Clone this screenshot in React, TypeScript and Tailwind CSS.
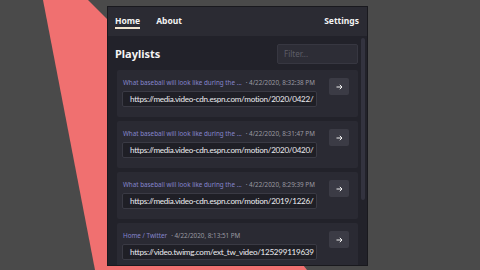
import React from "react";

const items = [
  {
    title: "What baseball will look like during the ...",
    date: "4/22/2020, 8:32:38 PM",
    url: "https://media.video-cdn.espn.com/motion/2020/0422/",
  },
  {
    title: "What baseball will look like during the ...",
    date: "4/22/2020, 8:31:47 PM",
    url: "https://media.video-cdn.espn.com/motion/2020/0420/",
  },
  {
    title: "What baseball will look like during the ...",
    date: "4/22/2020, 8:29:39 PM",
    url: "https://media.video-cdn.espn.com/motion/2019/1226/",
  },
  {
    title: "Home / Twitter",
    date: "4/22/2020, 8:13:51 PM",
    url: "https://video.twimg.com/ext_tw_video/125299119639",
  },
];

function Card({ title, date, url }: { title: string; date: string; url: string }) {
  return (
    <div className="flex shrink-0 h-[47px] bg-[#2a2a33] rounded-[2px] pl-[5px] pr-[8px] pt-[8px] gap-[12px]">
      <div className="flex flex-col w-[195px] min-w-0">
        <div className="flex items-center h-[10px] text-[6.3px] leading-none whitespace-nowrap pl-[1px]">
          <span className="text-[#8585cc]">{title}</span>
          <span className="text-[#9a9aa2] ml-[4px]">· {date}</span>
        </div>
        <div className="mt-[3px] h-[16px] bg-[#1f1f26] border border-[#3a3a44] rounded-[2px] flex items-center pl-[7px] overflow-hidden">
          <span
            className="text-[8.1px] text-[#ececf0] whitespace-nowrap leading-none tracking-[-0.27px]"
            style={{ fontFamily: "Lato, sans-serif" }}
          >
            {url}
          </span>
        </div>
      </div>
      <div className="w-[20px] h-[17px] bg-[#3b3b45] rounded-[2px] flex items-center justify-center">
        <svg width="7" height="6" viewBox="0 0 7 6" fill="none">
          <path d="M0.5 3H6M3.8 0.8L6 3L3.8 5.2" stroke="#f2f2f2" strokeWidth="1" />
        </svg>
      </div>
    </div>
  );
}

export default function App() {
  return (
    <div
      className="relative w-[480px] h-[270px] overflow-hidden bg-[#4a4a4a]"
      style={{ fontFamily: '"Noto Sans", "Open Sans", sans-serif' }}
    >
      <svg className="absolute left-0 top-0" width="480" height="270" viewBox="0 0 480 270">
        <polygon points="43,0 88,0 120,32 307,270 95,270" fill="#f07070" />
      </svg>
      <div className="relative ml-[107px] mt-[6px] w-[261px] h-[260px] bg-[#22222a] border border-[#19191e] flex flex-col overflow-hidden">
        <div className="h-[29px] shrink-0 bg-[#2b2b33] flex items-center pl-[7px] pr-[8px] text-[8.5px] font-bold text-[#f4f4f4]">
          <div className="relative">
            Home
            <div className="absolute left-0 right-0 top-[12px] h-[1.5px] bg-[#efe4d0]" />
          </div>
          <div className="ml-[16px]">About</div>
          <div className="ml-auto">Settings</div>
        </div>
        <div className="flex flex-1 min-h-0">
          <div className="flex-1 min-w-0 flex flex-col pl-[9px] pr-[1px]">
            <div className="flex items-center h-[33px] shrink-0 pt-[3px]">
              <div className="text-[11px] font-bold text-[#f4f4f4] ml-[-2px]">Playlists</div>
              <div className="ml-auto w-[81px] h-[20px] bg-[#2d2d36] border border-[#373741] rounded-[2px] flex items-center pl-[6px]">
                <span className="text-[8px] text-[#5e5e68]">Filter...</span>
              </div>
            </div>
            <div className="flex flex-col gap-[4px] mt-[1px]">
              {items.map((it, i) => (
                <Card key={i} {...it} />
              ))}
            </div>
          </div>
          <div className="w-[8px] shrink-0 flex justify-center pt-[2px]">
            <div className="w-[4px] h-[162px] bg-[#33333f] rounded-[2px]" />
          </div>
        </div>
      </div>
    </div>
  );
}
